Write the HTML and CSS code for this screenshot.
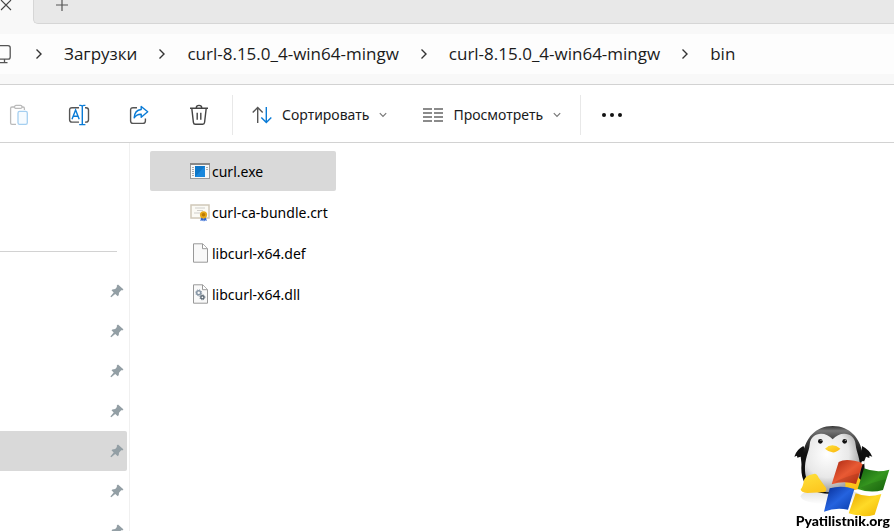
FILE: index.html
```html
<!DOCTYPE html>
<html lang="ru">
<head>
    <meta charset="UTF-8">
    <meta name="viewport" content="width=device-width, initial-scale=1.0">
    <title>bin</title>
    <link rel="stylesheet" href="styles.css">
</head>
<body>
    <svg class="symbols" aria-hidden="true">
        <symbol id="chevron" viewBox="0 0 8 12">
            <path d="M1.5 1.5 6 6 1.5 10.5" fill="none" stroke="#333" stroke-width="1.4"/>
        </symbol>
        <symbol id="chevron-down" viewBox="0 0 8 6">
            <path d="M.8 1.2 4 4.4 7.2 1.2" fill="none" stroke="#777" stroke-width="1.2"/>
        </symbol>
        <symbol id="pin" viewBox="0 0 14 14">
            <path d="M8 .6 13.3 5.3 13 6.2 11.2 6.3 9 8.8 8.8 11 7.8 12.2 5.2 9.9 1.3 13.2.4 12.4 3.7 8.5 1.5 6.2 2.4 5.4 5.2 5 6.9 3 6.8 1.5Z" fill="#939fa5"/>
        </symbol>
    </svg>

    <header class="tabs">
        <div class="tab">
            <button class="tab-btn" aria-label="Закрыть вкладку">
                <svg width="12" height="12" viewBox="0 0 12 12"><path d="M1 1 11 11M11 1 1 11" stroke="#444" stroke-width="1.1"/></svg>
            </button>
        </div>
        <div class="tab-rest">
            <button class="tab-btn" aria-label="Новая вкладка">
                <svg width="12" height="12" viewBox="0 0 12 12"><path d="M6 0V12M0 6H12" stroke="#555" stroke-width="1.2"/></svg>
            </button>
        </div>
    </header>

    <div class="address">
        <nav class="crumbs" aria-label="Путь">
            <a href="#" class="computer" aria-label="Этот компьютер">
                <svg width="14" height="20" viewBox="0 0 14 20" fill="none" stroke="#555" stroke-width="1.3">
                    <path d="M0 1.6H8Q10.2 1.6 10.2 3.8V13Q10.2 15.2 8 15.2H0M4.5 15.2V18.4M0 18.6H7.5"/>
                </svg>
            </a>
            <svg width="8" height="12"><use href="#chevron"/></svg>
            <a href="#">Загрузки</a>
            <svg width="8" height="12"><use href="#chevron"/></svg>
            <a href="#">curl-8.15.0_4-win64-mingw</a>
            <svg width="8" height="12"><use href="#chevron"/></svg>
            <a href="#">curl-8.15.0_4-win64-mingw</a>
            <svg width="8" height="12"><use href="#chevron"/></svg>
            <a href="#">bin</a>
        </nav>
    </div>

    <div class="toolbar">
        <div class="icon-group">
            <button class="icon-btn" aria-label="Вставить" disabled>
                <svg width="20" height="22" viewBox="0 0 20 22" fill="none" stroke-width="1.3">
                    <path d="M5.5 3H3Q1.6 3 1.6 4.4V18.9Q1.6 20.3 3 20.3H7M13 3H14Q15.4 3 15.4 4.4V6" stroke="#bbb"/>
                    <rect x="5.5" y="1.4" width="7.5" height="3" rx="1.5" stroke="#bbb"/>
                    <rect x="9" y="7.4" width="9.3" height="13" rx="1.6" stroke="#a5cff0" fill="#f6fbff"/>
                </svg>
            </button>
            <button class="icon-btn" aria-label="Переименовать">
                <svg width="22" height="22" viewBox="0 0 22 22" fill="none" stroke-width="1.4">
                    <path d="M11 3.7H4Q1.6 3.7 1.6 6.1V15.7Q1.6 18.1 4 18.1H11M17 3.7H18Q20.5 3.7 20.5 6.1V15.7Q20.5 18.1 18 18.1H17" stroke="#555"/>
                    <path d="M4 15.2 7.6 6 11.2 15.2M5.3 12.2H9.9M14.3 1.7V20.3M11.2 1.4H12.8Q14.3 1.4 14.3 2.6Q14.3 1.4 15.8 1.4H17.4M11.2 20.6H12.8Q14.3 20.6 14.3 19.4Q14.3 20.6 15.8 20.6H17.4" stroke="#0a7bd6"/>
                </svg>
            </button>
            <button class="icon-btn" aria-label="Поделиться">
                <svg width="20" height="22" viewBox="0 0 20 22" fill="none" stroke-width="1.4" stroke-linejoin="round">
                    <path d="M8 3.7H4Q1.6 3.7 1.6 6.1V17Q1.6 19.4 4 19.4H14Q16.4 19.4 16.4 17V14.5" stroke="#555"/>
                    <path d="M12.2 2.5 18.7 7.8 12.2 13.2V10.2Q7.8 10 5.2 13.8Q5.6 6.2 12.2 5.5Z" stroke="#0a7bd6"/>
                </svg>
            </button>
            <button class="icon-btn" aria-label="Удалить">
                <svg width="20" height="22" viewBox="0 0 20 22" fill="none" stroke="#444" stroke-width="1.4">
                    <path d="M1 4.2H19M7.2 4Q7.3 1.4 10 1.4Q12.7 1.4 12.8 4M2.8 4.4 4.4 18.3Q4.6 20.2 6.3 20.2H13.7Q15.4 20.2 15.6 18.3L17.2 4.4M8.2 8.7V15.7M11.8 8.7V15.7"/>
                </svg>
            </button>
        </div>
        <div class="menu-group">
            <button class="menu-btn">
                <svg width="20" height="18" viewBox="0 0 20 18" fill="none" stroke-width="1.4">
                    <path d="M5.7 17V1.6M.7 6.5 5.7 1.5 10.7 6.5" stroke="#555"/>
                    <path d="M14.3 1V16.4M9.3 11.5 14.3 16.5 19.3 11.5" stroke="#0a7bd6"/>
                </svg>
                <span>Сортировать</span>
                <svg width="8" height="6"><use href="#chevron-down"/></svg>
            </button>
            <button class="menu-btn">
                <svg width="20" height="14" viewBox="0 0 20 14" stroke="#666" stroke-width="1.3">
                    <path d="M0 1H9M11 1H20M0 5H9M11 5H20M0 9H9M11 9H20M0 13H9M11 13H20"/>
                </svg>
                <span>Просмотреть</span>
                <svg width="8" height="6"><use href="#chevron-down"/></svg>
            </button>
        </div>
        <button class="more-btn" aria-label="Дополнительно">
            <svg width="22" height="6" viewBox="0 0 22 6" fill="#111"><circle cx="3" cy="3" r="2"/><circle cx="11" cy="3" r="2"/><circle cx="19" cy="3" r="2"/></svg>
        </button>
    </div>

    <main class="content">
        <aside class="sidebar">
            <hr>
            <ul class="pins">
                <li><svg width="14" height="14"><use href="#pin"/></svg></li>
                <li><svg width="14" height="14"><use href="#pin"/></svg></li>
                <li><svg width="14" height="14"><use href="#pin"/></svg></li>
                <li><svg width="14" height="14"><use href="#pin"/></svg></li>
                <li class="active"><svg width="14" height="14"><use href="#pin"/></svg></li>
                <li><svg width="14" height="14"><use href="#pin"/></svg></li>
                <li><svg width="14" height="14"><use href="#pin"/></svg></li>
            </ul>
        </aside>
        <ul class="files">
            <li class="file selected">
                <svg width="20" height="20" viewBox="0 0 20 20">
                    <rect x=".5" y="2.5" width="19" height="15" fill="#f7f7f7" stroke="#999"/>
                    <path d="M0 3H20" stroke="#888" stroke-width="2"/>
                    <path d="M2 6.5H4M2 8.5H4M2 10.5H4M2 12.5H4M2 14.5H4M16 6.5H18M16 8.5H18" stroke="#aaa"/>
                    <rect x="5" y="5" width="10" height="11" fill="#0d76c8"/>
                    <path d="M5 16 15 5V16Z" fill="#1987dc"/>
                </svg>
                <span>curl.exe</span>
            </li>
            <li class="file">
                <svg width="20" height="20" viewBox="0 0 20 20">
                    <rect x="1" y="3" width="18" height="13" fill="#fbfaf5" stroke="#d0c8b8" stroke-width="1.5"/>
                    <path d="M5 6H15M7 8.5H13M4 11H10" stroke="#c5c3bf" stroke-width=".8"/>
                    <path d="M11.5 14 10.3 19 12.2 18.2 13.2 19.5 14 15ZM15.5 14 16.8 19 15 18.2 14 19.5 13 15Z" fill="#2d66d2"/>
                    <circle cx="13.5" cy="12.8" r="3.6" fill="#e6a817"/>
                    <circle cx="13.5" cy="12.8" r="1.8" fill="#b97905"/>
                </svg>
                <span>curl-ca-bundle.crt</span>
            </li>
            <li class="file">
                <svg width="20" height="20" viewBox="0 0 20 20">
                    <path d="M3.5.8H12.7L17.5 5.6V19.2H3.5Z" fill="#f9f9f9" stroke="#999"/>
                    <path d="M12.5 1V5.7H17.4" fill="#fff" stroke="#999"/>
                </svg>
                <span>libcurl-x64.def</span>
            </li>
            <li class="file">
                <svg width="20" height="20" viewBox="0 0 20 20">
                    <path d="M3.5.8H12.7L17.5 5.6V19.2H3.5Z" fill="#f9f9f9" stroke="#999"/>
                    <path d="M12.5 1V5.7H17.4" fill="#fff" stroke="#999"/>
                    <g fill="none" stroke="#8796a5">
                        <circle cx="8.7" cy="8.8" r="2" stroke-width="1.5"/>
                        <circle cx="8.7" cy="8.8" r="3" stroke-width="1" stroke-dasharray="1.2 1.15"/>
                    </g>
                    <g fill="none" stroke="#5d6a76">
                        <circle cx="12.4" cy="13.3" r="1.6" stroke-width="1.4"/>
                        <circle cx="12.4" cy="13.3" r="2.5" stroke-width="1" stroke-dasharray="1 .96"/>
                    </g>
                </svg>
                <span>libcurl-x64.dll</span>
            </li>
        </ul>
    </main>

    <div class="watermark">
        <svg width="110" height="111" viewBox="0 0 330 333">
            <defs>
                <linearGradient id="head" x1="0" y1="0" x2="0" y2="1"><stop offset="0" stop-color="#333"/><stop offset=".07" stop-color="#777"/><stop offset=".2" stop-color="#444"/><stop offset=".4" stop-color="#111"/><stop offset="1" stop-color="#050505"/></linearGradient>
                <radialGradient id="belly" cx=".4" cy=".35" r=".72"><stop offset="0" stop-color="#fff"/><stop offset=".55" stop-color="#e8e8e8"/><stop offset="1" stop-color="#858585"/></radialGradient>
                <linearGradient id="foot" x1="0" y1="0" x2="1" y2="1"><stop offset="0" stop-color="#ffe23c"/><stop offset="1" stop-color="#fbb50c"/></linearGradient>
                <linearGradient id="red" x1="0" y1="0" x2="1" y2="1"><stop offset="0" stop-color="#a82510"/><stop offset=".5" stop-color="#e85a34"/><stop offset="1" stop-color="#c52b0c"/></linearGradient>
                <linearGradient id="green" x1="0" y1="0" x2="1" y2="1"><stop offset="0" stop-color="#12600d"/><stop offset=".5" stop-color="#36961f"/><stop offset="1" stop-color="#176e0d"/></linearGradient>
                <linearGradient id="blue" x1="0" y1="0" x2="1" y2="1"><stop offset="0" stop-color="#062b93"/><stop offset=".5" stop-color="#2563df"/><stop offset="1" stop-color="#0739a7"/></linearGradient>
                <linearGradient id="yellow" x1="0" y1="0" x2="1" y2="1"><stop offset="0" stop-color="#e7a800"/><stop offset=".5" stop-color="#ffda27"/><stop offset="1" stop-color="#f0b600"/></linearGradient>
                <linearGradient id="ground" x1="0" y1="0" x2="0" y2="1"><stop offset="0" stop-color="#ddd"/><stop offset="1" stop-color="#fff"/></linearGradient>
            </defs>
            <ellipse cx="140" cy="229" rx="90" ry="24" fill="url(#ground)"/>
            <path d="M58 78Q38 88 31 110L39 107 40 113 50 110Q52 135 62 150L80 120ZM234 78Q257 90 265 110L256 107 256 114 246 110L230 150Z" fill="#111"/>
            <path d="M146 18C92 18 66 56 57 100C49 140 48 180 73 203C98 228 196 228 221 201C247 176 244 138 236 100C227 56 200 18 146 18Z" fill="url(#head)"/>
            <path d="M146 58C124 32 80 36 77 74C75 96 61 116 63 152C66 200 98 217 146 217C197 217 227 198 229 152C230 116 217 96 215 74C212 36 168 32 146 58Z" fill="url(#belly)"/>
            <circle cx="109" cy="64" r="7" fill="#111"/><circle cx="182" cy="64" r="7" fill="#111"/>
            <circle cx="111" cy="61" r="2" fill="#aaa"/><circle cx="184" cy="61" r="2" fill="#aaa"/>
            <path d="M123 86Q144 66 169 86Q154 99 145 97Q134 96 123 86Z" fill="url(#foot)"/>
            <path d="M86 163Q97 156 104 173L126 203Q131 215 115 217L70 219Q50 218 50 207Q56 205 60 180Q66 166 86 163ZM183 163Q210 155 230 179L246 202 185 217Z" fill="url(#foot)"/>
            <path d="M164 126Q188 113 237 130L216 192Q180 181 143 193Z" fill="url(#red)"/>
            <path d="M240 145Q276 160 316 149L297 210Q260 221 221 207Z" fill="url(#green)"/>
            <path d="M137 205Q173 195 211 207L192 269Q155 261 120 275Z" fill="url(#blue)"/>
            <path d="M215 220Q252 235 292 222L272 284Q238 295 194 280Z" fill="url(#yellow)"/>
            <circle cx="237" cy="128" r="5" fill="#fff"/>
            <path d="M151 187Q180 171 226 159L216 192Q180 181 151 187ZM229 203Q260 188 306 177L297 210Q260 221 229 203Z" fill="#000" opacity=".1"/>
        </svg>
        <span>Pyatilistnik.org</span>
    </div>
</body>
</html>
```

FILE: styles.css
```css
* {
    box-sizing: border-box;
}
body {
    margin: 0;
    height: 100vh;
    display: flex;
    flex-direction: column;
    overflow: hidden;
    background-color: #fff;
    color: #1b1b1b;
    font-family: "Noto Sans", "Open Sans", sans-serif;
    font-size: 14px;
}
svg {
    display: block;
    flex-shrink: 0;
}
ul {
    list-style: none;
    margin: 0;
    padding: 0;
}
a {
    color: inherit;
    text-decoration: none;
}
button {
    display: flex;
    align-items: center;
    justify-content: center;
    padding: 0;
    border: none;
    background: none;
    color: inherit;
    font: inherit;
}
.symbols {
    display: none;
}

/* Tabs */
.tabs {
    display: flex;
    height: 24px;
    flex-shrink: 0;
    background-color: #f8f8f8;
}
.tab {
    width: 33px;
}
.tab-btn {
    width: 12px;
    height: 10px;
}
.tab-rest {
    flex: 1;
    padding-left: 22px;
    background-color: #e8e8e8;
    border-left: 1px solid #d6d6d6;
    border-bottom: 1px solid #d6d6d6;
    border-bottom-left-radius: 5px;
}

/* Address bar */
.address {
    flex-shrink: 0;
    padding: 10px 0;
    background-color: #f8f8f8;
    border-bottom: 1px solid #d2d2d2;
}
.crumbs {
    display: flex;
    align-items: center;
    gap: 21px;
    height: 40px;
    padding-bottom: 1px;
    background-color: #fdfdfd;
    font-family: "Open Sans", "Noto Sans", sans-serif;
    font-size: 17px;
    white-space: nowrap;
}

/* Toolbar */
.toolbar {
    display: flex;
    align-items: center;
    flex-shrink: 0;
    height: 58px;
    padding-top: 2px;
    border-bottom: 1px solid #d2d2d2;
}
.icon-group {
    display: flex;
    gap: 22px;
    padding-right: 14px;
}
.icon-btn {
    width: 38px;
    height: 38px;
}
.menu-group {
    display: flex;
    gap: 36px;
    height: 40px;
    padding: 0 19px;
    border-left: 1px solid #e8e8e8;
    border-right: 1px solid #e8e8e8;
    font-size: 14px;
}
.menu-btn {
    gap: 10px;
}
.more-btn {
    width: 62px;
    height: 38px;
}

/* Content */
.content {
    display: flex;
    flex: 1;
    min-height: 0;
}
.sidebar {
    width: 130px;
    flex-shrink: 0;
    padding: 108px 2px 0 0;
    border-right: 1px solid #f0f0f0;
    overflow: hidden;
}
.sidebar hr {
    margin: 0 10px 19px 0;
    border: none;
    border-top: 1px solid #d2d2d2;
}
.pins li {
    display: flex;
    align-items: center;
    justify-content: flex-end;
    height: 40px;
    padding-right: 3px;
}
.pins .active {
    background-color: #d9d9d9;
    border-radius: 0 2px 2px 0;
}
.files {
    display: flex;
    flex-direction: column;
    align-items: flex-start;
    gap: 1px;
    padding: 8px 20px;
}
.file {
    display: flex;
    align-items: center;
    gap: 2px;
    height: 40px;
    min-width: 186px;
    padding: 0 7px 0 40px;
    border-radius: 2px;
    color: #000;
}
.file.selected {
    background-color: #d9d9d9;
}

/* Site logo over the lower right corner */
.watermark {
    position: fixed;
    right: 0;
    bottom: 0;
}
.watermark span {
    position: absolute;
    right: 4px;
    bottom: 2px;
    color: #000;
    font: 900 14px/16px Lato, sans-serif;
    text-shadow: 0 0 1px #fff, 1px 1px 1px #fff, -1px -1px 1px #fff;
}
```
